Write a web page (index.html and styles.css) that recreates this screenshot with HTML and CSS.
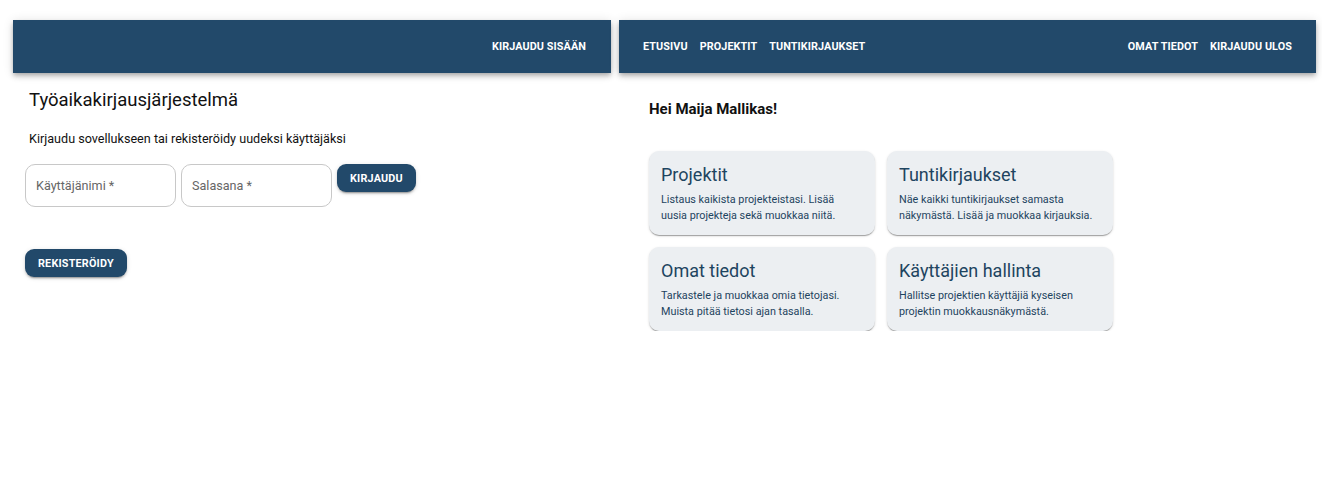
FILE: index.html
```html
<!DOCTYPE html>
<html lang="fi">
<head>
<meta charset="utf-8">
<title>Työaikakirjausjärjestelmä</title>
<link rel="stylesheet" href="styles.css">
</head>
<body>
<div class="screens">
  <section class="panel panel-left">
    <header class="appbar appbar-end">
      <span class="nav-btn">Kirjaudu sisään</span>
    </header>
    <div class="login">
      <h1 class="title">Työaikakirjausjärjestelmä</h1>
      <p class="lead">Kirjaudu sovellukseen tai rekisteröidy uudeksi käyttäjäksi</p>
      <div class="form-row">
        <div class="field">Käyttäjänimi *</div>
        <div class="field">Salasana *</div>
        <button class="btn">Kirjaudu</button>
      </div>
      <button class="btn btn-reg">Rekisteröidy</button>
    </div>
  </section>
  <section class="panel panel-right">
    <header class="appbar">
      <nav class="nav-group">
        <span class="nav-btn">Etusivu</span>
        <span class="nav-btn">Projektit</span>
        <span class="nav-btn">Tuntikirjaukset</span>
      </nav>
      <nav class="nav-group">
        <span class="nav-btn">Omat tiedot</span>
        <span class="nav-btn">Kirjaudu ulos</span>
      </nav>
    </header>
    <div class="home">
      <h2 class="greet">Hei Maija Mallikas!</h2>
      <div class="cards">
        <div class="card">
          <div class="card-title">Projektit</div>
          <div class="card-text">Listaus kaikista projekteistasi. Lisää uusia projekteja sekä muokkaa niitä.</div>
        </div>
        <div class="card">
          <div class="card-title">Tuntikirjaukset</div>
          <div class="card-text">Näe kaikki tuntikirjaukset samasta näkymästä. Lisää ja muokkaa kirjauksia.</div>
        </div>
        <div class="card">
          <div class="card-title">Omat tiedot</div>
          <div class="card-text">Tarkastele ja muokkaa omia tietojasi. Muista pitää tietosi ajan tasalla.</div>
        </div>
        <div class="card">
          <div class="card-title">Käyttäjien hallinta</div>
          <div class="card-text">Hallitse projektien käyttäjiä kyseisen projektin muokkausnäkymästä.</div>
        </div>
      </div>
    </div>
  </section>
</div>
</body>
</html>
```

FILE: styles.css
```css
* { box-sizing: border-box; }
html, body { margin: 0; padding: 0; background: #fff; }
body {
  font-family: Roboto, "Liberation Sans", Arial, sans-serif;
  color: #111;
}
.screens {
  display: flex;
  gap: 8px;
  padding: 20px 0 0 13px;
}
.panel-left { width: 598px; }
.panel-right { width: 697px; }
.appbar {
  height: 53px;
  background: #22496a;
  box-shadow: 0 2px 4px -1px rgba(0,0,0,.2), 0 4px 5px 0 rgba(0,0,0,.14), 0 1px 10px 0 rgba(0,0,0,.12);
  display: flex;
  align-items: center;
  justify-content: space-between;
  padding: 0 18px;
}
.appbar-end { justify-content: flex-end; padding-right: 19px; }
.nav-group { display: flex; }
.nav-btn {
  color: #fff;
  font-size: 10.8px;
  font-weight: 700;
  text-transform: uppercase;
  letter-spacing: 0.1px;
  padding: 6px;
}
.login { padding: 0 12px; }
.title {
  font-size: 18.5px;
  font-weight: 400;
  margin: 15px 0 0 4px;
  line-height: 24px;
}
.lead {
  font-size: 12.6px;
  margin: 18px 0 0 4px;
  line-height: 18px;
}
.form-row {
  display: flex;
  gap: 5px;
  margin-top: 16px;
  align-items: flex-start;
}
.field {
  width: 151px;
  height: 43px;
  border: 1px solid #c8c8c8;
  border-radius: 10px;
  font-size: 12.6px;
  color: #666;
  padding: 0 10px;
  display: flex;
  align-items: center;
}
.btn {
  font-family: inherit;
  border: 0;
  background: #22496a;
  color: #fff;
  font-size: 10.8px;
  font-weight: 700;
  text-transform: uppercase;
  border-radius: 9px;
  height: 28px;
  padding: 0 13px;
  box-shadow: 0 3px 1px -2px rgba(0,0,0,.2), 0 2px 2px 0 rgba(0,0,0,.14), 0 1px 5px 0 rgba(0,0,0,.12);
  letter-spacing: 0.2px;
}
.btn-reg { margin-top: 42px; display: block; }
.home { padding: 0 30px; }
.greet {
  font-size: 15px;
  font-weight: 700;
  margin: 26px 0 0 0;
  line-height: 20px;
}
.cards {
  display: grid;
  grid-template-columns: 226px 226px;
  gap: 12px;
  margin-top: 32px;
}
.card {
  background: #eceff2;
  border-radius: 10px;
  height: 84px;
  padding: 12px 18px 12px 12px;
  box-shadow: 0 2px 1px -1px rgba(0,0,0,.2), 0 1px 1px 0 rgba(0,0,0,.14), 0 1px 3px 0 rgba(0,0,0,.12);
  color: #1e4460;
}
.card-title {
  font-size: 18px;
  line-height: 24px;
}
.card-text {
  font-size: 10.8px;
  line-height: 16px;
  margin-top: 5px;
}
```
